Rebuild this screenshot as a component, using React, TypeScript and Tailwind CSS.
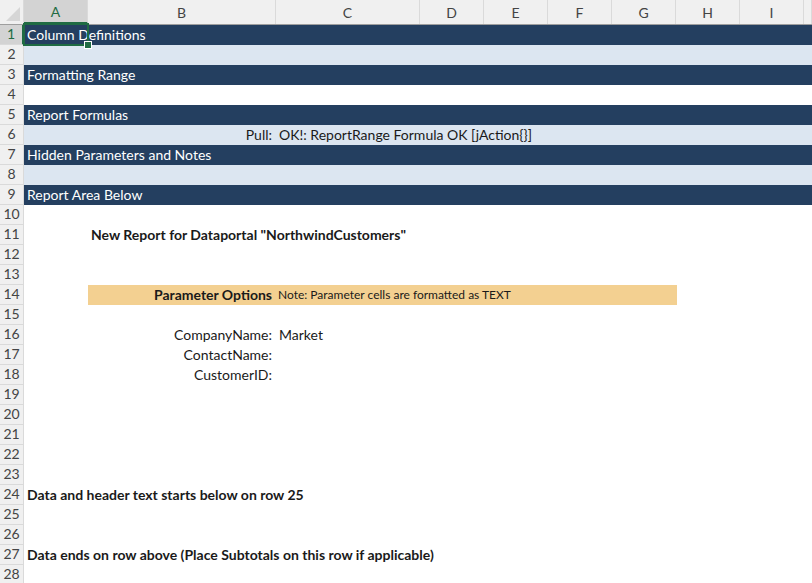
import React from "react";

const cols = ["A", "B", "C", "D", "E", "F", "G", "H", "I", ""];
const widths = ["w-[64px]", "w-[188px]", "w-[144px]", "w-[64px]", "w-[64px]", "w-[64px]", "w-[64px]", "w-[64px]", "w-[64px]", "flex-1"];

type Row = {
  bg?: string;
  a?: React.ReactNode;
  b?: React.ReactNode;
  c?: React.ReactNode;
};

const navy = "bg-[#243f60]";
const pale = "bg-[#dce6f1]";

const white = (t: string) => <span className="text-white">{t}</span>;

const rows: Row[] = [
  { bg: navy, a: white("Column Definitions") },
  { bg: pale },
  { bg: navy, a: white("Formatting Range") },
  {},
  { bg: navy, a: white("Report Formulas") },
  {
    bg: pale,
    b: "Pull:",
    c: "OK!: ReportRange Formula OK [jAction{}]",
  },
  { bg: navy, a: white("Hidden Parameters and Notes") },
  { bg: pale },
  { bg: navy, a: white("Report Area Below") },
  {},
  {},
  {},
  {},
  {},
  {},
  { b: "CompanyName:", c: "Market" },
  { b: "ContactName:" },
  { b: "CustomerID:" },
  {},
  {},
  {},
  {},
  {},
  {},
  {},
  {},
  {},
  {},
];

function RowHeader({ n }: { n: number }) {
  const sel = n === 1;
  return (
    <div
      className={`w-[24px] shrink-0 h-full flex items-end justify-center border-r border-b border-[#dadada] ${
        sel ? "bg-[#d3d3d3] text-[#1f6b43] border-r-2 border-r-[#1f6b43]" : "bg-[#f0f0f0] text-[#444]"
      }`}
    >
      {n}
    </div>
  );
}

function SheetRow({ n, row }: { n: number; row: Row }) {
  if (n === 11) {
    return (
      <div className="flex h-[20px]">
        <RowHeader n={n} />
        <div className="flex-1 flex">
          <div className="w-[64px]" />
          <div className="pl-[3px] flex items-end whitespace-nowrap font-bold">
            New Report for Dataportal "NorthwindCustomers"
          </div>
        </div>
      </div>
    );
  }
  if (n === 14) {
    return (
      <div className="flex h-[20px]">
        <RowHeader n={n} />
        <div className="flex-1 flex">
          <div className="w-[64px]" />
          <div className="w-[589px] bg-[#f3d091] flex items-end">
            <div className="w-[188px] text-right pr-[4px] font-bold whitespace-nowrap">Parameter Options</div>
            <div className="pl-[2px] pb-[1px] text-[12px] whitespace-nowrap">Note: Parameter cells are formatted as TEXT</div>
          </div>
        </div>
      </div>
    );
  }
  if (n === 24 || n === 27) {
    return (
      <div className="flex h-[20px]">
        <RowHeader n={n} />
        <div className="flex-1 flex items-end pl-[3px] whitespace-nowrap font-bold">
          {n === 24
            ? "Data and header text starts below on row 25"
            : "Data ends on row above (Place Subtotals on this row if applicable)"}
        </div>
      </div>
    );
  }
  return (
    <div className="flex h-[20px]">
      <RowHeader n={n} />
      <div className={`flex-1 flex ${row.bg ?? ""}`}>
        <div className="w-[64px] shrink-0 relative">
          {row.a && (
            <div className="absolute left-[3px] bottom-0 whitespace-nowrap">{row.a}</div>
          )}
        </div>
        <div className="w-[188px] shrink-0 flex items-end justify-end pr-[4px] whitespace-nowrap">
          {row.b}
        </div>
        <div className="flex-1 flex items-end pl-[3px] whitespace-nowrap">{row.c}</div>
      </div>
    </div>
  );
}

export default function App() {
  return (
    <div
      className="w-[812px] h-[583px] overflow-hidden bg-white text-[14px] text-[#1a1a1a] relative"
      style={{ fontFamily: "Lato, 'Open Sans', sans-serif" }}
    >
      {/* column headers */}
      <div className="flex h-[25px] bg-[#f0f0f0] border-b border-[#9e9e9e]">
        <div className="w-[24px] shrink-0 relative border-r border-[#dadada]">
          <svg className="absolute right-[3px] bottom-[3px]" width="14" height="14" viewBox="0 0 14 14">
            <path d="M14 0 L14 14 L0 14 Z" fill="#d6d6d6" />
          </svg>
        </div>
        {cols.map((c, i) => (
          <div
            key={i}
            className={`${widths[i]} shrink-0 flex items-center justify-center pt-[1px] border-r border-[#dadada] ${
              i === 0 ? "bg-[#d3d3d3] text-[#1f6b43] border-b-2 border-b-[#1f6b43]" : "text-[#444]"
            }`}
          >
            {c}
          </div>
        ))}
      </div>

      {rows.map((r, i) => (
        <SheetRow key={i} n={i + 1} row={r} />
      ))}

      {/* active cell selection */}
      <div className="absolute left-[23px] top-[23px] w-[66px] h-[23px] border-2 border-[#1f6b43] pointer-events-none">
        <div className="absolute right-[-5px] bottom-[-5px] w-[8px] h-[8px] bg-[#1f6b43] border border-white" />
      </div>
    </div>
  );
}
